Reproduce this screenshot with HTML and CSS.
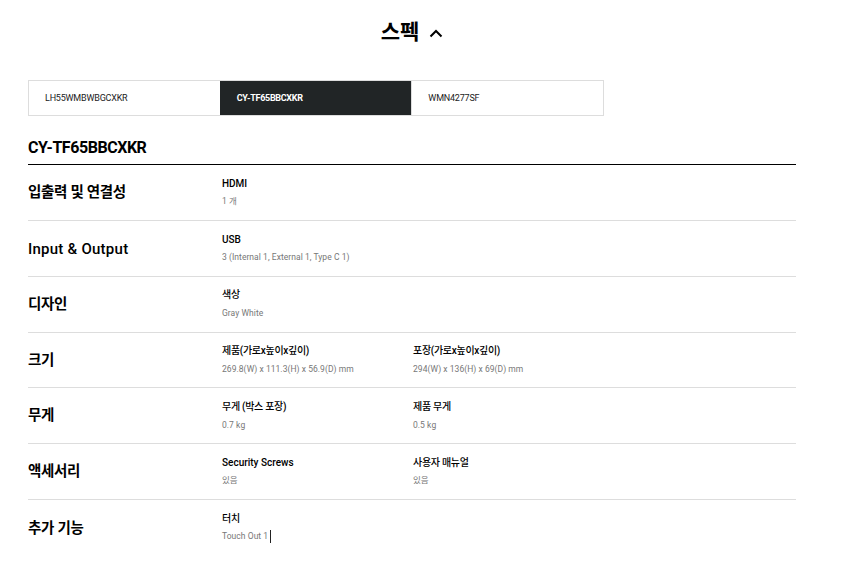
FILE: index.html
```html
<!DOCTYPE html>
<html lang="ko">
<head>
<meta charset="utf-8">
<title>스펙</title>
<link rel="stylesheet" href="styles.css">
</head>
<body>
<main class="page">
  <h2 class="title">스펙
    <svg class="chev" width="14" height="9" viewBox="0 0 14 9"><path d="M1.5 7.5 7 2l5.5 5.5" fill="none" stroke="#000" stroke-width="2"/></svg>
  </h2>
  <div class="tabs">
    <div class="tab">LH55WMBWBGCXKR</div>
    <div class="tab active">CY-TF65BBCXKR</div>
    <div class="tab">WMN4277SF</div>
  </div>
  <h3 class="model">CY-TF65BBCXKR</h3>
  <section class="specs">
    <div class="row">
      <div class="label">입출력 및 연결성</div>
      <div class="item"><div class="name">HDMI</div><div class="value">1 개</div></div>
    </div>
    <div class="row">
      <div class="label latin">Input &amp; Output</div>
      <div class="item"><div class="name">USB</div><div class="value">3 (Internal 1, External 1, Type C 1)</div></div>
    </div>
    <div class="row">
      <div class="label">디자인</div>
      <div class="item"><div class="name ko">색상</div><div class="value">Gray White</div></div>
    </div>
    <div class="row">
      <div class="label">크기</div>
      <div class="item"><div class="name ko">제품(가로x높이x깊이)</div><div class="value">269.8(W) x 111.3(H) x 56.9(D) mm</div></div>
      <div class="item"><div class="name ko">포장(가로x높이x깊이)</div><div class="value">294(W) x 136(H) x 69(D) mm</div></div>
    </div>
    <div class="row">
      <div class="label">무게</div>
      <div class="item"><div class="name ko">무게 (박스 포장)</div><div class="value">0.7 kg</div></div>
      <div class="item"><div class="name ko">제품 무게</div><div class="value">0.5 kg</div></div>
    </div>
    <div class="row">
      <div class="label">액세서리</div>
      <div class="item"><div class="name">Security Screws</div><div class="value">있음</div></div>
      <div class="item"><div class="name ko">사용자 매뉴얼</div><div class="value">있음</div></div>
    </div>
    <div class="row last">
      <div class="label">추가 기능</div>
      <div class="item"><div class="name ko">터치</div><div class="value">Touch Out 1<span class="caret"></span></div></div>
    </div>
  </section>
</main>
</body>
</html>
```
FILE: styles.css
```css
* { box-sizing: border-box; }
html, body { margin: 0; background: #fff; }
body {
  font-family: Roboto, "Noto Sans CJK KR", sans-serif;
  color: #000;
  overflow: hidden;
}
.page { width: 857px; height: 575px; padding: 0 61px 0 28px; }
.title {
  margin: 0;
  height: 80px;
  padding-top: 18px;
  display: flex;
  justify-content: center;
  align-items: flex-start;
  gap: 10px;
  font-size: 21px;
  line-height: 29px;
  font-weight: 700;
}
.chev { margin-top: 11px; }
.tabs {
  display: flex;
  width: 576px;
  height: 36px;
  border: 1px solid #ddd;
}
.tab {
  flex: 1;
  padding-left: 16px;
  display: flex;
  align-items: center;
  font-size: 9px;
  color: #222;
  letter-spacing: -0.2px;
}
.tab + .tab { border-left: 1px solid #ddd; }
.tab.active {
  background: #212526;
  color: #fff;
  font-weight: 700;
  letter-spacing: -0.3px;
  border-left-color: #212526;
}
.model {
  margin: 0;
  height: 49.2px;
  padding-top: 20px;
  border-bottom: 1px solid #000;
  font-size: 16px;
  line-height: 24px;
  font-weight: 700;
  letter-spacing: -0.45px;
}
.row {
  display: grid;
  grid-template-columns: 194px 191px 191px;
  height: 55.8px;
  border-bottom: 1px solid #ddd;
  padding-top: 10.6px;
}
.row.last { border-bottom: 0; }
.label {
  align-self: center;
  margin-top: -9.2px;
  font-size: 14.5px;
  line-height: 22px;
  font-weight: 700;
  letter-spacing: -0.3px;
}
.label.latin { margin-top: -10px; font-size: 15px; font-weight: 500; letter-spacing: 0.25px; }
.name {
  font-size: 10px;
  line-height: 16px;
  font-weight: 500;
}
.name.ko { letter-spacing: -0.3px; }
.value {
  margin-top: 2.6px;
  font-size: 8.5px;
  line-height: 14px;
  color: #777;
  letter-spacing: 0.05px;
  display: flex;
  align-items: center;
}
.caret {
  display: inline-block;
  width: 1px;
  height: 13px;
  margin-left: 2px;
  background: #222;
}
```
